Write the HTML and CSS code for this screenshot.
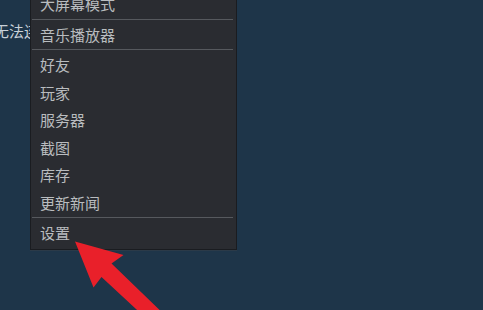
FILE: index.html
```html
<!DOCTYPE html>
<html lang="zh-CN">
<head>
  <meta charset="UTF-8">
  <meta name="viewport" content="width=device-width, initial-scale=1.0">
  <title>Steam 菜单</title>
  <link rel="stylesheet" href="styles.css">
</head>
<body>
  <div id="page">
    <p class="notice">无法连接</p>
  </div>

  <div id="menu">
    <div class="item">大屏幕模式</div>
    <div class="sep"></div>
    <div class="item">音乐播放器</div>
    <div class="sep"></div>
    <div class="item">好友</div>
    <div class="item">玩家</div>
    <div class="item">服务器</div>
    <div class="item">截图</div>
    <div class="item">库存</div>
    <div class="item">更新新闻</div>
    <div class="sep"></div>
    <div class="item">设置</div>
  </div>

  <svg id="arrow" width="483" height="310" viewBox="0 0 483 310">
    <polygon points="75,241.5 123.5,255 111.5,263.5 172,322 150,322 101.5,277 93.5,287.5" fill="#e9202a"/>
  </svg>
</body>
</html>
```

FILE: styles.css
```css
body { margin: 0; width: 483px; height: 310px; overflow: hidden; background: #1e3549; font-family: "Noto Sans CJK SC", "Noto Sans", sans-serif; position: relative; }
#page { padding-top: 22px; }
.notice { margin: 0 0 0 -6px; font-size: 15px; line-height: 18px; color: #c9d1d9; white-space: nowrap; }
#menu { position: absolute; top: -11px; left: 30px; width: 205px; padding-bottom: 2px; background: #2a2c31; border: 1px solid #1a1c20; box-shadow: 0 1px 0 #2b3a48; }
.item { height: 27.5px; line-height: 27.5px; padding-left: 9px; font-size: 15px; color: #b9bcbf; white-space: nowrap; }
.sep { height: 1px; margin: 1px 3px 1px 1px; background: #56595e; }
.sep + .item { margin-top: 1px; }
#arrow { position: absolute; top: 0; left: 0; }
```
